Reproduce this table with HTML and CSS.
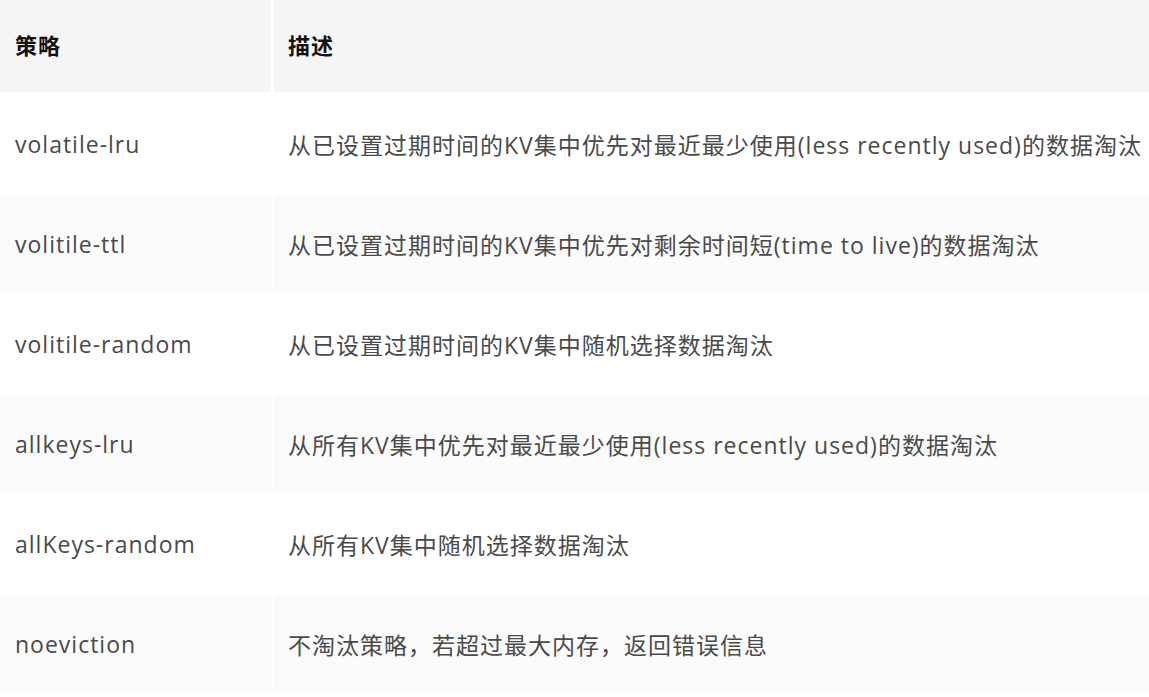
FILE: index.html
```html
<!DOCTYPE html>
<html lang="zh-CN">
<head>
    <meta charset="UTF-8">
    <meta name="viewport" content="width=device-width, initial-scale=1.0">
    <title>Redis 淘汰策略</title>
    <link rel="stylesheet" href="styles.css">
</head>
<body>
    <table class="policy-table">
        <thead>
            <tr>
                <th class="col-name">策略</th>
                <th>描述</th>
            </tr>
        </thead>
        <tbody>
            <tr>
                <td>volatile-lru</td>
                <td>从已设置过期时间的KV集中优先对最近最少使用(less recently used)的数据淘汰</td>
            </tr>
            <tr>
                <td>volitile-ttl</td>
                <td>从已设置过期时间的KV集中优先对剩余时间短(time to live)的数据淘汰</td>
            </tr>
            <tr>
                <td>volitile-random</td>
                <td>从已设置过期时间的KV集中随机选择数据淘汰</td>
            </tr>
            <tr>
                <td>allkeys-lru</td>
                <td>从所有KV集中优先对最近最少使用(less recently used)的数据淘汰</td>
            </tr>
            <tr>
                <td>allKeys-random</td>
                <td>从所有KV集中随机选择数据淘汰</td>
            </tr>
            <tr>
                <td>noeviction</td>
                <td>不淘汰策略，若超过最大内存，返回错误信息</td>
            </tr>
        </tbody>
    </table>
</body>
</html>
```

FILE: styles.css
```css
body {
    margin: 0;
    background: #fff;
    font-family: "Open Sans", "Noto Sans CJK SC", sans-serif;
    overflow: hidden;
}

.policy-table {
    border-collapse: separate;
    border-spacing: 3px;
    margin: -3px 0 0 -3px;
    width: 1200px;
    font-size: 23px;
    letter-spacing: 1px;
    color: #4a4a4a;
}

.policy-table th,
.policy-table td {
    text-align: left;
    vertical-align: middle;
    padding: 0 0 0 15px;
    white-space: nowrap;
}

.policy-table th {
    height: 88px;
    padding-bottom: 4px;
    background: #f5f5f5;
    color: #111;
    font-weight: bold;
    font-size: 22px;
}

.policy-table .col-name {
    width: 256px;
}

.policy-table td + td,
.policy-table th + th {
    padding-left: 14px;
}

.policy-table td {
    height: 97px;
    background: #fff;
}

.policy-table tbody tr:nth-child(even) td {
    background: #fbfbfb;
}
```
